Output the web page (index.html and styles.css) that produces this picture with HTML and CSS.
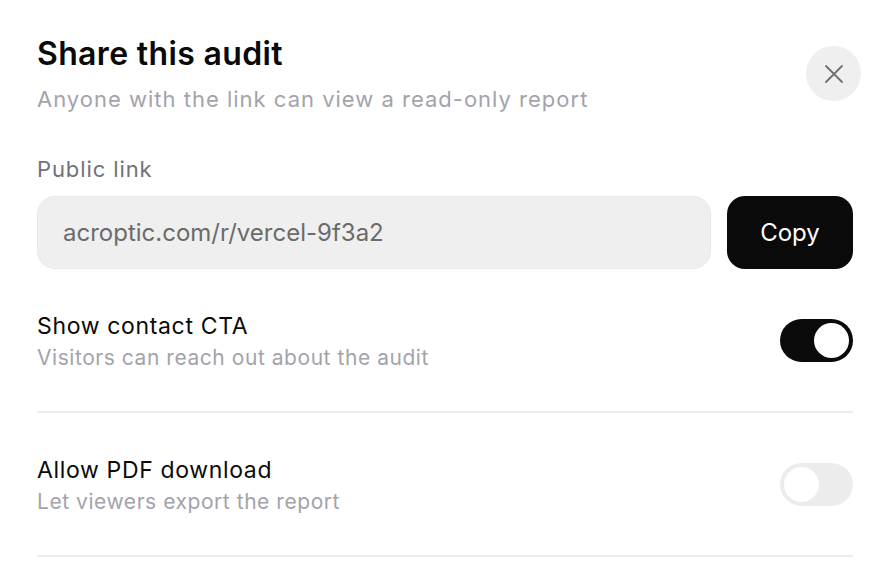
FILE: index.html
```html
<!DOCTYPE html>
<html lang="en">
<head>
<meta charset="utf-8">
<title>Share this audit</title>
<link rel="stylesheet" href="styles.css">
</head>
<body>
<div class="dialog">
  <div class="header">
    <div class="heading">
      <h1 class="title">Share this audit</h1>
      <p class="subtitle">Anyone with the link can view a read-only report</p>
    </div>
    <button class="close" aria-label="Close">
      <svg width="20" height="20" viewBox="0 0 20 20" fill="none" stroke="#6f6f76" stroke-width="1.8" stroke-linecap="round"><path d="M2 2L18 18M18 2L2 18"/></svg>
    </button>
  </div>
  <div class="field">
    <div class="label">Public link</div>
    <div class="link-row">
      <div class="link-input">acroptic.com/r/vercel-9f3a2</div>
      <button class="copy">Copy</button>
    </div>
  </div>
  <div class="option">
    <div class="option-text">
      <div class="option-title">Show contact CTA</div>
      <div class="option-desc">Visitors can reach out about the audit</div>
    </div>
    <div class="toggle on"><span class="knob"></span></div>
  </div>
  <div class="option">
    <div class="option-text">
      <div class="option-title">Allow PDF download</div>
      <div class="option-desc">Let viewers export the report</div>
    </div>
    <div class="toggle off"><span class="knob"></span></div>
  </div>
</div>
</body>
</html>
```
FILE: styles.css
```css
* { box-sizing: border-box; }
html, body { margin: 0; padding: 0; background: #ffffff; }
body { font-family: Inter, "Noto Sans", sans-serif; color: #0a0a0a; }
.dialog { padding: 36px 38px 0 37px; }
.header { display: flex; justify-content: space-between; align-items: flex-start; }
.title { margin: 0; font-size: 32px; line-height: 36px; font-weight: 600; letter-spacing: 0.35px; }
.subtitle { margin: 13px 0 0; font-size: 22px; line-height: 28px; color: #a3a3ab; letter-spacing: 1px; }
.close { width: 55px; height: 55px; margin-top: 10px; margin-right: -8px; border: none; border-radius: 50%; background: #efefef; display: flex; align-items: center; justify-content: center; padding: 0; }
.field { margin-top: 42px; }
.label { font-size: 22px; line-height: 28px; color: #71717a; letter-spacing: 0.9px; }
.link-row { display: flex; gap: 16px; margin-top: 13px; }
.link-input { flex: 1; height: 73px; border-radius: 18px; background: #efefef; border: 1px solid #e8e8e8; display: flex; align-items: center; padding-left: 25px; font-size: 24px; color: #6b6b6b; }
.copy { width: 126px; height: 73px; border: none; border-radius: 18px; background: #0a0a0a; color: #fff; font-family: inherit; font-size: 24px; }
.option { display: flex; justify-content: space-between; align-items: center; padding: 42px 0 39px; border-bottom: 2px solid #ececec; }
.option-title { font-size: 23px; line-height: 30px; color: #0a0a0a; letter-spacing: 0.65px; }
.option-desc { margin-top: 3px; font-size: 21px; line-height: 28px; color: #a3a3ab; letter-spacing: 0.55px; }
.toggle { width: 73px; height: 43px; border-radius: 22px; position: relative; margin-bottom: 3px; }
.toggle.on { background: #0a0a0a; }
.toggle.off { background: #ececec; }
.knob { position: absolute; top: 4px; width: 35px; height: 35px; border-radius: 50%; background: #fff; }
.toggle.on .knob { right: 4px; }
.toggle.off .knob { left: 4px; }
```
